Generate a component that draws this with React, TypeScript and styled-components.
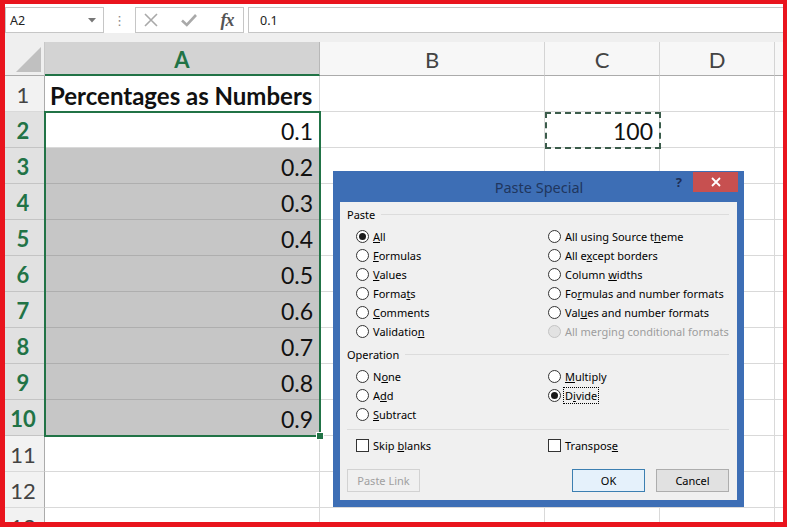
import React from 'react';
import styled, { createGlobalStyle, css } from 'styled-components';

const GREEN = '#217346';
const GRID = '#d9d9d9';
const SHEET_FONT = "'Lato', 'Open Sans', sans-serif";
const UI_FONT = "'Noto Sans', 'Open Sans', sans-serif";

const GlobalStyle = createGlobalStyle`
  html, body {
    margin: 0;
    padding: 0;
    background: #fff;
  }
  body {
    font-family: ${UI_FONT};
  }
`;

const Frame = styled.div`
  position: relative;
  width: 787px;
  height: 527px;
  box-sizing: border-box;
  border-style: solid;
  border-color: #e9141d;
  border-width: 4px 4px 5px 5px;
  overflow: hidden;
  background: #fff;
  display: flex;
  flex-direction: column;
`;

/* ---------- formula bar ---------- */

const Toolbar = styled.div`
  height: 29px;
  flex-shrink: 0;
  display: flex;
  align-items: flex-end;
  background: #fff;
  font-family: ${UI_FONT};
  font-size: 12.5px;
  color: #222;
`;

const NameBox = styled.div`
  width: 99px;
  height: 26px;
  box-sizing: border-box;
  border: 1px solid #c6c6c6;
  display: flex;
  align-items: center;
  justify-content: space-between;
  padding: 0 7px 0 4px;
`;

const Grip = styled.div`
  width: 31px;
  height: 26px;
  display: flex;
  align-items: center;
  justify-content: center;
  color: #8a8a8a;
  font-family: 'DejaVu Sans', sans-serif;
  font-size: 13px;
`;

const FxBox = styled.div`
  width: 109px;
  height: 26px;
  box-sizing: border-box;
  border: 1px solid #c6c6c6;
  display: flex;
  align-items: center;
  gap: 16px;
  padding-left: 4px;
`;

const FxSlot = styled.div`
  width: 22px;
  display: flex;
  align-items: center;
  justify-content: center;
`;

const FxText = styled.span`
  font-family: 'Liberation Serif', serif;
  font-style: italic;
  font-weight: bold;
  font-size: 18px;
  color: #555;
  letter-spacing: -1px;
`;

const FormulaBox = styled.div`
  flex: 1;
  height: 26px;
  margin-left: 4px;
  box-sizing: border-box;
  border: 1px solid #c6c6c6;
  border-right: none;
  display: flex;
  align-items: center;
  padding-left: 11px;
`;

const Strip = styled.div`
  height: 9px;
  flex-shrink: 0;
  background: #efefef;
`;

/* ---------- sheet ---------- */

const Sheet = styled.div`
  display: grid;
  grid-template-columns: 40px 275px 225px 115px 115px 1fr;
  grid-template-rows: 34px repeat(13, 36px);
  font-family: ${SHEET_FONT};
  color: #111;
`;

type Pos = { $row: number; $col: number };

const placed = css<Pos>`
  grid-row: ${p => p.$row};
  grid-column: ${p => p.$col};
`;

const Corner = styled.div<Pos>`
  ${placed};
  position: relative;
  background: #efefef;
  border-right: 1px solid #c8c8c8;
  border-bottom: 1px solid #ababab;
  &::after {
    content: '';
    position: absolute;
    right: 3px;
    bottom: 3px;
    width: 25px;
    height: 25px;
    background: #c0c0c0;
    clip-path: polygon(100% 0, 100% 100%, 0 100%);
  }
`;

const ColHead = styled.div<Pos & { $active?: boolean }>`
  ${placed};
  box-sizing: border-box;
  display: flex;
  align-items: center;
  justify-content: center;
  font-size: 22px;
  padding-top: 2px;
  background: ${p => (p.$active ? '#d3d3d3' : '#f7f7f7')};
  color: ${p => (p.$active ? GREEN : '#444')};
  font-weight: ${p => (p.$active ? 700 : 400)};
  border-right: 1px solid ${p => (p.$active ? '#b8b8b8' : '#d4d4d4')};
  border-bottom: ${p => (p.$active ? `2px solid ${GREEN}` : '1px solid #ababab')};
`;

const RowHead = styled.div<Pos & { $active?: boolean }>`
  ${placed};
  box-sizing: border-box;
  display: flex;
  align-items: center;
  justify-content: center;
  padding: 2px 3px 0 0;
  font-size: 22px;
  background: ${p => (p.$active ? '#e1e1e1' : '#f2f2f2')};
  color: ${p => (p.$active ? GREEN : '#444')};
  font-weight: ${p => (p.$active ? 700 : 400)};
  border-right: 1px solid #ababab;
  border-bottom: 1px solid ${p => (p.$active ? '#c4c4c4' : GRID)};
`;

const Cell = styled.div<Pos & { $fill?: boolean; $align?: 'left' | 'right'; $bold?: boolean }>`
  ${placed};
  box-sizing: border-box;
  display: flex;
  align-items: center;
  justify-content: ${p => (p.$align === 'left' ? 'flex-start' : 'flex-end')};
  padding: 3px 6px 0 5px;
  font-size: ${p => (p.$bold ? '24px' : '23px')};
  font-weight: ${p => (p.$bold ? 700 : 400)};
  white-space: nowrap;
  background: ${p => (p.$fill ? '#c6c6c6' : '#fff')};
  border-right: 1px solid ${GRID};
  border-bottom: 1px solid ${p => (p.$fill ? '#aeaeae' : GRID)};
`;

const Selection = styled.div<{ $rows: string; $col: number }>`
  grid-row: ${p => p.$rows};
  grid-column: ${p => p.$col};
  position: relative;
  z-index: 2;
  margin: -1px;
  border: 2px solid ${GREEN};
  pointer-events: none;
`;

const FillHandle = styled.div`
  position: absolute;
  right: -5px;
  bottom: -5px;
  width: 6px;
  height: 6px;
  background: ${GREEN};
  border: 1px solid #fff;
`;

const CopyMarquee = styled.div<Pos>`
  ${placed};
  position: relative;
  z-index: 2;
  margin: 0 -1px -1px 0;
  border: 2px dashed #3b5c4b;
  pointer-events: none;
`;

/* ---------- paste special dialog ---------- */

const Dialog = styled.div`
  position: absolute;
  left: 328px;
  top: 167px;
  z-index: 5;
  width: 411px;
  height: 336px;
  box-sizing: border-box;
  background: #3d6eb5;
  padding: 0 7px 7px 7px;
  display: flex;
  flex-direction: column;
  font-family: ${UI_FONT};
  font-size: 11px;
  color: #000;
`;

const TitleBar = styled.div`
  height: 31px;
  flex-shrink: 0;
  display: grid;
  grid-template-columns: 1fr auto 1fr;
  margin-right: -1px;
`;

const Title = styled.div`
  grid-column: 2;
  align-self: center;
  font-size: 14.5px;
  color: #20365e;
  padding-top: 1px;
`;

const TitleButtons = styled.div`
  grid-column: 3;
  display: flex;
  justify-content: flex-end;
  align-items: flex-start;
`;

const Help = styled.div`
  height: 21px;
  margin: 0 11px 0 0;
  display: flex;
  align-items: center;
  font-weight: 700;
  font-size: 13px;
  color: #1d2f55;
`;

const Close = styled.div`
  width: 45px;
  height: 20px;
  margin-top: 1px;
  background: #c75050;
  color: #fff;
  display: flex;
  align-items: center;
  justify-content: center;
`;

const Panel = styled.div`
  flex: 1;
  background: #f0f0f0;
  padding: 5px 8px 8px 7px;
  display: flex;
  flex-direction: column;
`;

const SectionHead = styled.div<{ $gap?: number }>`
  height: 14px;
  margin-top: ${p => p.$gap ?? 0}px;
  display: flex;
  align-items: center;
  gap: 6px;
  &::after {
    content: '';
    flex: 1;
    height: 1px;
    background: #dcdcdc;
  }
`;

const OptionGrid = styled.div`
  margin-top: 6px;
  padding-left: 9px;
  display: grid;
  grid-template-columns: 192px 1fr;
  align-items: start;
`;

const Column = styled.div`
  display: grid;
  grid-auto-rows: 19px;
`;

const Option = styled.div<{ $disabled?: boolean }>`
  display: flex;
  align-items: center;
  gap: 4px;
  white-space: nowrap;
  color: ${p => (p.$disabled ? '#9d9d9d' : '#000')};
`;

const Radio = styled.span<{ $checked?: boolean; $disabled?: boolean }>`
  position: relative;
  width: 13px;
  height: 13px;
  flex-shrink: 0;
  box-sizing: border-box;
  border-radius: 50%;
  border: 1px solid ${p => (p.$disabled ? '#c4c4c4' : '#333')};
  background: ${p => (p.$disabled ? '#e2e2e2' : '#fff')};
  &::after {
    content: '';
    display: ${p => (p.$checked ? 'block' : 'none')};
    position: absolute;
    left: 2px;
    top: 2px;
    width: 7px;
    height: 7px;
    border-radius: 50%;
    background: #1a1a1a;
  }
`;

const Check = styled.span`
  width: 13px;
  height: 13px;
  flex-shrink: 0;
  box-sizing: border-box;
  border: 1px solid #333;
  background: #fff;
`;

const Focus = styled.span`
  outline: 1px dotted #000;
  outline-offset: 0;
  padding: 0 1px;
  margin-left: -1px;
`;

const Separator = styled.div`
  height: 1px;
  margin-top: 5px;
  background: #dcdcdc;
`;

const ChecksRow = styled.div`
  margin-top: 6px;
  padding-left: 9px;
  display: grid;
  grid-template-columns: 192px 1fr;
  height: 19px;
`;

const ButtonRow = styled.div`
  margin-top: 14px;
  display: flex;
  gap: 11px;
`;

const Button = styled.div<{ $variant?: 'default' | 'primary' | 'disabled' }>`
  width: 73px;
  height: 23px;
  box-sizing: border-box;
  display: flex;
  align-items: center;
  justify-content: center;
  ${p =>
    p.$variant === 'primary'
      ? css`
          margin-left: auto;
          background: #e5f1fb;
          border: 1px solid #3c7fb1;
        `
      : p.$variant === 'disabled'
      ? css`
          background: #f0f0f0;
          border: 1px solid #d2d2d2;
          color: #a0a0a0;
        `
      : css`
          background: #e1e1e1;
          border: 1px solid #adadad;
        `}
`;

/* ---------- helpers ---------- */

// "&All" -> underline the letter after the ampersand
const mn = (label: string) => {
  const i = label.indexOf('&');
  if (i < 0) return label;
  return (
    <>
      {label.slice(0, i)}
      <u>{label[i + 1]}</u>
      {label.slice(i + 2)}
    </>
  );
};

type Opt = { label: string; checked?: boolean; disabled?: boolean; focus?: boolean };

const pasteLeft: Opt[] = [
  { label: '&All', checked: true },
  { label: '&Formulas' },
  { label: '&Values' },
  { label: 'Forma&ts' },
  { label: '&Comments' },
  { label: 'Validatio&n' },
];

const pasteRight: Opt[] = [
  { label: 'All using Source t&heme' },
  { label: 'All e&xcept borders' },
  { label: 'Column &widths' },
  { label: 'Fo&rmulas and number formats' },
  { label: 'Val&ues and number formats' },
  { label: 'All merging conditional formats', disabled: true },
];

const opLeft: Opt[] = [{ label: 'N&one' }, { label: 'A&dd' }, { label: '&Subtract' }];
const opRight: Opt[] = [{ label: '&Multiply' }, { label: 'D&ivide', checked: true, focus: true }];

const RadioList = ({ items }: { items: Opt[] }) => (
  <Column>
    {items.map(o => (
      <Option key={o.label} $disabled={o.disabled}>
        <Radio $checked={o.checked} $disabled={o.disabled} />
        {o.focus ? <Focus>{mn(o.label)}</Focus> : <span>{mn(o.label)}</span>}
      </Option>
    ))}
  </Column>
);

const columns = ['A', 'B', 'C', 'D', ''];
const ROWS = 13;

const CrossIcon = () => (
  <svg width="16" height="16" viewBox="0 0 16 16">
    <path d="M2 2 L14 14 M14 2 L2 14" stroke="#a9a9a9" strokeWidth="1.6" fill="none" />
  </svg>
);

const CheckIcon = () => (
  <svg width="18" height="16" viewBox="0 0 18 16">
    <path d="M2 8.5 L6.8 13 L16 3" stroke="#a9a9a9" strokeWidth="2.6" fill="none" />
  </svg>
);

const DropArrow = () => (
  <svg width="8" height="5" viewBox="0 0 8 5">
    <polygon points="0,0 8,0 4,4.5" fill="#777" />
  </svg>
);

const App = () => {
  const rows = Array.from({ length: ROWS }, (_, i) => i + 1);

  return (
    <Frame>
      <GlobalStyle />
      <Toolbar>
        <NameBox>
          <span>A2</span>
          <DropArrow />
        </NameBox>
        <Grip>⋮</Grip>
        <FxBox>
          <FxSlot><CrossIcon /></FxSlot>
          <FxSlot><CheckIcon /></FxSlot>
          <FxSlot><FxText>fx</FxText></FxSlot>
        </FxBox>
        <FormulaBox>0.1</FormulaBox>
      </Toolbar>
      <Strip />

      <Sheet>
        <Corner $row={1} $col={1} />
        {columns.map((c, i) => (
          <ColHead key={i} $row={1} $col={i + 2} $active={c === 'A'}>
            {c}
          </ColHead>
        ))}

        {rows.map(r => {
          const selected = r >= 2 && r <= 10;
          return (
            <React.Fragment key={r}>
              <RowHead $row={r + 1} $col={1} $active={selected}>
                {r}
              </RowHead>
              {columns.map((c, i) => {
                let content: React.ReactNode = null;
                if (c === 'A' && r === 1) content = 'Percentages as Numbers';
                if (c === 'A' && selected) content = ((r - 1) / 10).toFixed(1);
                if (c === 'C' && r === 2) content = '100';
                return (
                  <Cell
                    key={c + i}
                    $row={r + 1}
                    $col={i + 2}
                    $fill={c === 'A' && r >= 3 && r <= 10}
                    $align={r === 1 ? 'left' : 'right'}
                    $bold={r === 1}
                  >
                    {content}
                  </Cell>
                );
              })}
            </React.Fragment>
          );
        })}

        <Selection $rows="3 / 12" $col={2}>
          <FillHandle />
        </Selection>
        <CopyMarquee $row={3} $col={4} />
      </Sheet>

      <Dialog>
        <TitleBar>
          <Title>Paste Special</Title>
          <TitleButtons>
            <Help>?</Help>
            <Close>
              <svg width="10" height="10" viewBox="0 0 10 10">
                <path d="M1 1 L9 9 M9 1 L1 9" stroke="#fff" strokeWidth="1.8" />
              </svg>
            </Close>
          </TitleButtons>
        </TitleBar>
        <Panel>
          <SectionHead>Paste</SectionHead>
          <OptionGrid>
            <RadioList items={pasteLeft} />
            <RadioList items={pasteRight} />
          </OptionGrid>

          <SectionHead $gap={6}>Operation</SectionHead>
          <OptionGrid>
            <RadioList items={opLeft} />
            <RadioList items={opRight} />
          </OptionGrid>

          <Separator />
          <ChecksRow>
            <Option>
              <Check />
              <span>{mn('Skip &blanks')}</span>
            </Option>
            <Option>
              <Check />
              <span>{mn('Transpos&e')}</span>
            </Option>
          </ChecksRow>

          <ButtonRow>
            <Button $variant="disabled">Paste Link</Button>
            <Button $variant="primary">OK</Button>
            <Button>Cancel</Button>
          </ButtonRow>
        </Panel>
      </Dialog>
    </Frame>
  );
};

export default App;
